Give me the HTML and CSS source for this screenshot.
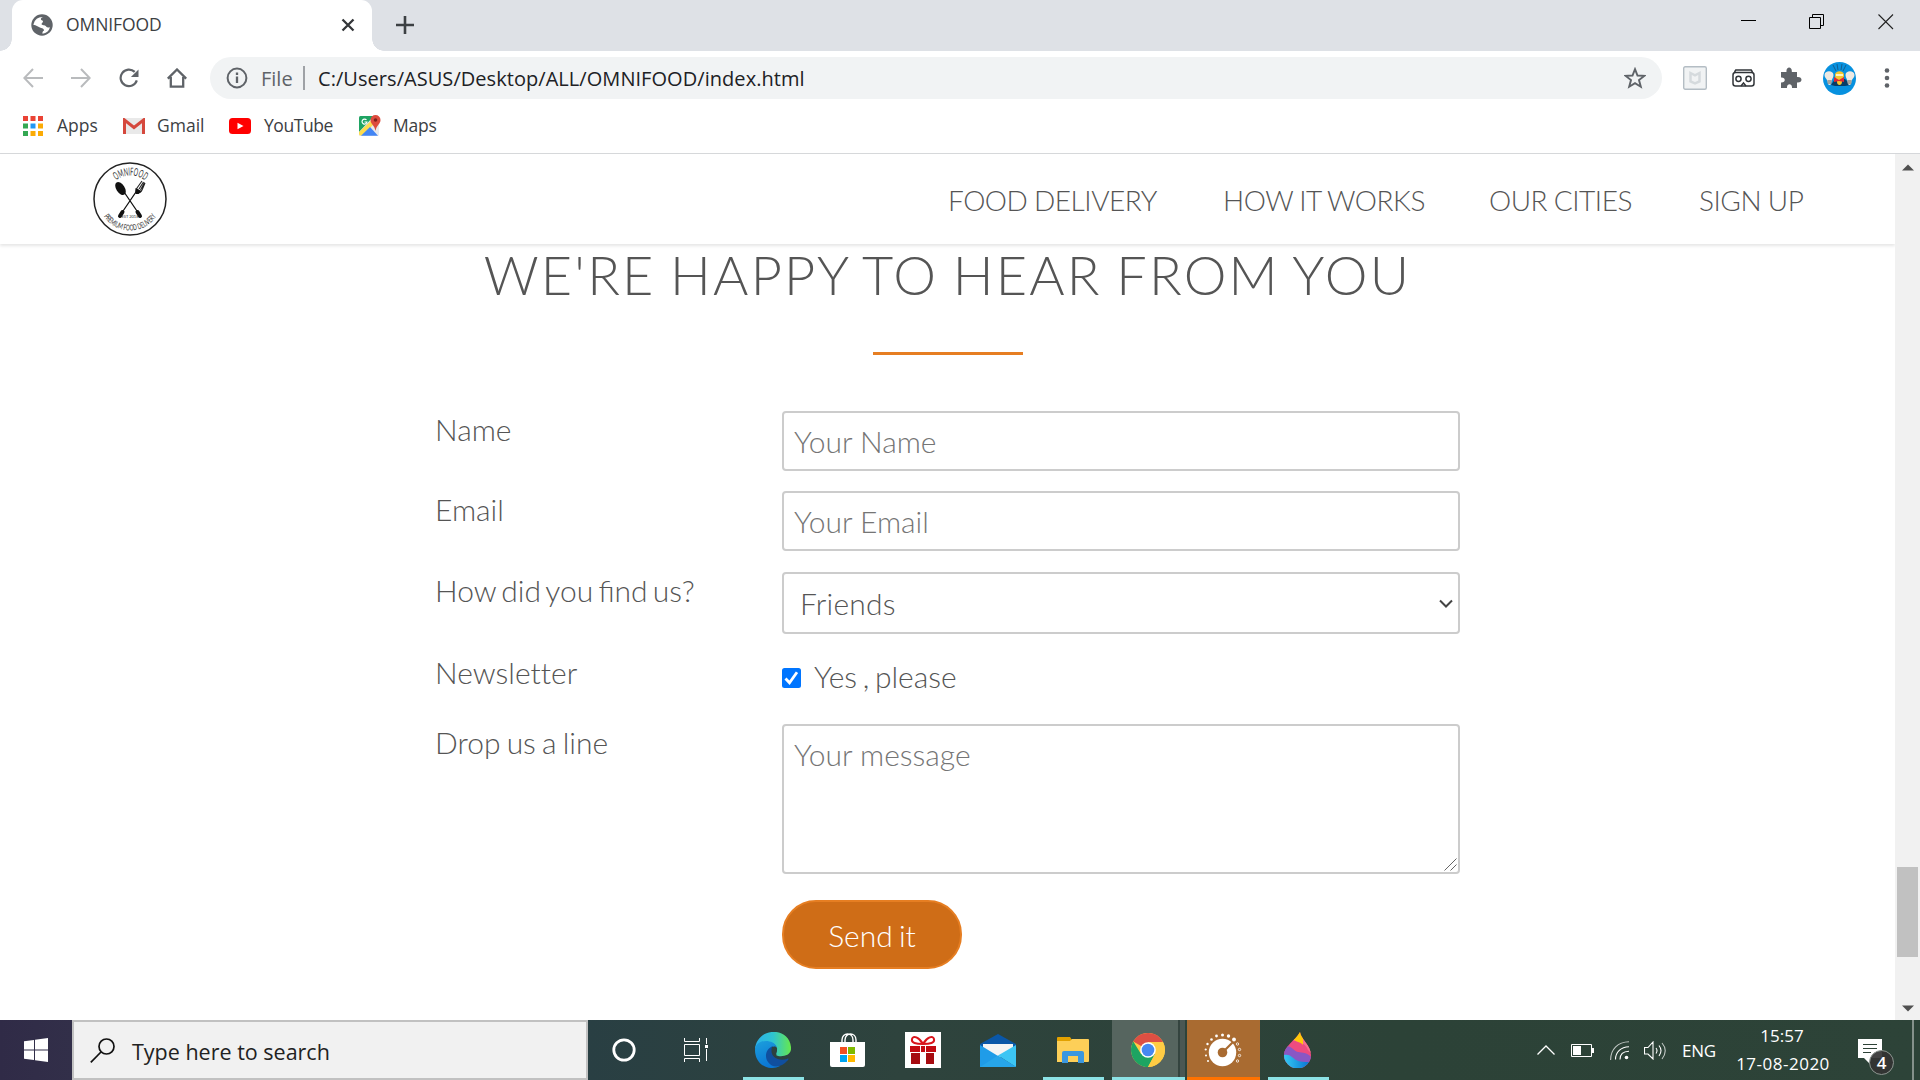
FILE: index.html
```html
<!DOCTYPE html>
<html lang="en">
<head>
<meta charset="utf-8">
<title>OMNIFOOD</title>
<link rel="stylesheet" href="styles.css">
</head>
<body>
<div class="screen">
  <header class="tabstrip">
    <div class="tab">
      <svg class="globe" width="22" height="22" viewBox="0 0 22 22"><circle cx="11" cy="11" r="10.7" fill="#5f6368"/><path d="M12.500 3c-2 .2-3 1.500-2.500 2.800 1 1 1.800.4 2 1.600-.2 1.500-1.500 1.500-1.500 2.800 1.500 1.500 4 .6 4.600 2.400.8 1 2.200 1 3.900.6a9 9 0 0 1-7.500 6.500c-.2-2 .2-2.500 1.600-3.300-.2-1.800-1.400-2.300-3-2.500C8 13.500 5 11.200 2.300 10.800a9 9 0 0 1 10.200-7.800z" fill="#fff"/><path d="M12.600 3.200a8 8 0 0 1 6.400 8c-1.500.9-3 .4-3.700-.8-1-1.300-2-1.100-3.600-1.300 0-1.200 1.400-1.500 1.400-3-.2-1-1.500-1.200-.5-2.900z" fill="#5f6368"/></svg>
      <span class="tab-title">OMNIFOOD</span>
      <svg class="tab-close" width="14" height="14" viewBox="0 0 14 14"><path d="M1.500 1.500l11 11M12.500 1.500l-11 11" stroke="#333639" stroke-width="2.300"/></svg>
    </div>
    <svg class="newtab" width="18" height="18" viewBox="0 0 18 18"><path d="M9 0v18M0 9h18" stroke="#3c4043" stroke-width="2.600"/></svg>
    <div class="win-buttons">
      <svg width="16" height="16" viewBox="0 0 16 16"><path d="M1 6.500h15" stroke="#000"/></svg>
      <svg width="16" height="16" viewBox="0 0 16 16" fill="none" stroke="#000"><path d="M.5 3.500h11v11h-11zM3.500 3.500v-3h11v11h-3"/></svg>
      <svg width="16" height="16" viewBox="0 0 16 16"><path d="M.5.5l14.500 14.500M15 .5L.5 15" stroke="#222" stroke-width="1.100"/></svg>
    </div>
  </header>

  <div class="toolbar">
    <div class="nav-icons">
      <svg width="20" height="20" viewBox="0 0 20 20" fill="none" stroke="#b9bbbd" stroke-width="2"><path d="M20 10H1.500M10 1L1.300 10l8.700 9"/></svg>
      <svg width="20" height="20" viewBox="0 0 20 20" fill="none" stroke="#b9bbbd" stroke-width="2"><path d="M0 10h18.500M10 1l8.700 9-8.700 9"/></svg>
      <svg width="20" height="20" viewBox="0 0 21 20"><path d="M16.500 3.600A8.700 8.700 0 1 0 18.700 12.500" fill="none" stroke="#5f6368" stroke-width="2.300"/><path d="M20.500 1v8h-8z" fill="#5f6368"/></svg>
      <svg width="20" height="20" viewBox="0 0 20 20" fill="none" stroke="#5f6368" stroke-width="2.300"><path d="M.8 10.600L10 1.500l9.200 9.100M3.800 9v9.700h12.400V9"/></svg>
    </div>
    <div class="omnibox">
      <svg width="22" height="22" viewBox="0 0 22 22"><circle cx="11" cy="11" r="9.400" fill="none" stroke="#5f6368" stroke-width="2"/><path d="M11 9.500v6.500M11 5.500v2.500" stroke="#5f6368" stroke-width="2.300"/></svg>
      <span class="scheme">File</span>
      <span class="divider"></span>
      <span class="url">C:/Users/ASUS/Desktop/ALL/OMNIFOOD/index.html</span>
      <svg class="star" width="22" height="22" viewBox="0 0 22 22"><path d="M11 2.200l2.500 6.300 6.700.4-5.200 4.200 1.800 6.600L11 16.100l-5.800 3.600L7 13.100 1.800 8.900l6.700-.4z" fill="none" stroke="#5f6368" stroke-width="1.900"/></svg>
    </div>
    <div class="extensions">
      <svg width="24" height="24" viewBox="0 0 24 24"><rect x=".7" y=".7" width="22.600" height="22.600" rx="1.500" fill="#f1f3f4" stroke="#b4bdc4" stroke-width="1.400"/><path d="M7.500 7l4.500 2.300L16.500 7v8.500L12 17.500l-4.500-2z" fill="none" stroke="#d5dadd" stroke-width="2.500"/></svg>
      <svg width="23" height="18" viewBox="0 0 23 18" fill="none" stroke="#303438" stroke-width="1.500"><rect x="1" y="3.500" width="21" height="13.500" rx="2.500"/><path d="M2.500 3l1.300-2h15.400l1.300 2" stroke-width="1.500"/><circle cx="6.500" cy="9.800" r="2.600"/><circle cx="16.500" cy="9.800" r="2.600"/><path d="M9 17l2.500-3 2.500 3"/></svg>
      <svg width="22" height="22" viewBox="0 0 22 22"><path d="M1 5h5.500c-.8-6 6-6 5.300 0H17v5c6-.8 6 6.200 0 5.500V21h-5c.5-5-5.500-5-5 0H1v-5.500c5 .4 5-5.500 0-5z" fill="#5f6368"/></svg>
      <svg class="avatar" width="33" height="33" viewBox="0 0 33 33"><circle cx="16.500" cy="16.500" r="16.500" fill="#0791df"/><path d="M10 3l3 6M14 2l1 6M19 2l-1 6M23 3l-3 6" stroke="#125f91"/><path d="M8 23l4-6h10l6 6-6 1H12z" fill="#083c66"/><path d="M1.500 13c0-5 9-5 9 0 0 3-2 4-2 7 0 4-4 4-4 0 0-3-3-4-3-7z" fill="#eee9e2"/><path d="M22.500 13c0-5 9-5 9 0 0 3-3 4-3 7 0 4-4 4-4 0 0-3-2-4-2-7z" fill="#eee9e2"/><path d="M4.500 19h4M24.500 19h4M4.500 21h4M24.500 21h4" stroke="#655f59" stroke-width="1"/><path d="M12 13c0-5 9-5 9 0 0 4-2 4-2 7 0 4-5 4-5 0 0-3-2-3-2-7z" fill="#f6c72e"/><path d="M11 15l5 3 5-3v5l-5-1-5 1z" fill="#dc2733"/><path d="M13 12h7v2h-7z" fill="#fff3c0"/></svg>
      <svg width="6" height="20" viewBox="0 0 6 20" fill="#5f6368"><circle cx="3" cy="2.500" r="2.300"/><circle cx="3" cy="10" r="2.300"/><circle cx="3" cy="17.500" r="2.300"/></svg>
    </div>
  </div>

  <nav class="bookmarks">
    <a class="bm bm-apps"><svg width="20" height="20" viewBox="0 0 20 20"><path d="M0 0h5v5H0zM7.500 0h5v5h-5zM15 0h5v5h-5z" fill="#ea4335"/><path d="M0 7.500h5v5H0zM0 15h5v5H0z" fill="#34a853"/><path d="M7.500 7.500h5v5h-5z" fill="#2196f3"/><path d="M15 7.500h5v5h-5zM7.500 15h5v5h-5zM15 15h5v5h-5z" fill="#fbab05"/></svg><span>Apps</span></a>
    <a class="bm bm-gmail"><svg width="22" height="16" viewBox="0 0 22 16"><rect width="22" height="16" rx="1.500" fill="#e9e9e9"/><path d="M1.500 16V2L11 9.500 20.500 2v14" fill="none" stroke="#d5483d" stroke-width="3"/></svg><span>Gmail</span></a>
    <a class="bm bm-youtube"><svg width="22" height="16" viewBox="0 0 22 16"><rect width="22" height="16" rx="3.500" fill="#f00"/><path d="M8.500 4.800l6 3.200-6 3.300z" fill="#fff"/></svg><span>YouTube</span></a>
    <a class="bm bm-maps"><svg width="22" height="21" viewBox="0 0 22 21"><rect y="1" width="20" height="20" rx="1.500" fill="#e8eaed"/><path d="M0 2.500Q0 1 1.500 1H15L0 17z" fill="#1fa463"/><path d="M0 17L14 4v6L3 20.500H1.500Q0 20.500 0 19z" fill="#fddc4e"/><path d="M2 20.800l9-8.800 8 8.800z" fill="#4285f4"/><path d="M16.500 0a5 5 0 0 1 5 5c0 4-4 5-5 11-1-6-5-7-5-11a5 5 0 0 1 5-5z" fill="#dd4b3e"/><circle cx="16.500" cy="5" r="1.800" fill="#7d211c"/><path d="M7.500 5A2.500 2.500 0 1 0 8 7H5.500" fill="none" stroke="#fff" stroke-width="1.200"/></svg><span>Maps</span></a>
  </nav>

  <div class="viewport">
    <main class="page">
      <div class="site-nav">
        <svg class="logo" width="74" height="74" viewBox="0 0 74 74">
          <defs><path id="arc-top" d="M14 37a23.500 23.500 0 0 1 47 0"/><path id="arc-bottom" d="M5.500 37a31.500 31.500 0 0 0 63 0"/></defs>
          <circle cx="37" cy="37" r="36" fill="#fff" stroke="#222" stroke-width="1.500"/>
          <text class="logo-top"><textPath href="#arc-top" startOffset="50%" text-anchor="middle" textLength="31" lengthAdjust="spacingAndGlyphs">OMNIFOOD</textPath></text>
          <text class="logo-bottom"><textPath href="#arc-bottom" startOffset="50%" text-anchor="middle" textLength="62" lengthAdjust="spacingAndGlyphs">PREMIUM FOOD DELIVERY</textPath></text>
          <path d="M29 27L46 52M45 27L28 52" stroke="#111" stroke-width="1.300"/>
          <path d="M44.500 50l2.500 4M29.500 50l-2.500 4" stroke="#111" stroke-width="4" stroke-linecap="round"/>
          <ellipse cx="27.500" cy="26.500" rx="4.200" ry="7.300" transform="rotate(-33 27.500 26.500)" fill="#111"/>
          <path d="M49 19l-5 7c-2 3-1 5 1 5s3-1 4-3l3-7M50.500 20l-4.500 7M51.500 20.500l-4 7.500" fill="none" stroke="#222" stroke-width="1.100"/><path d="M42.500 26l6 3-3 3h-3z" fill="#111"/>
          <text class="logo-year" x="37" y="56" text-anchor="middle">EST 2018</text>
        </svg>
        <ul class="menu">
          <li class="m1">Food delivery</li><li class="m2">How it works</li><li class="m3">Our cities</li><li class="m4">Sign up</li>
        </ul>
      </div>
      <h2><span>We're happy to hear from you</span></h2>
      <form class="contact">
        <label for="name">Name</label>
        <input class="field" id="name" type="text" placeholder="Your Name">
        <label for="email">Email</label>
        <input class="field" id="email" type="text" placeholder="Your Email">
        <label for="find">How did you find us?</label>
        <div class="field select" id="find"><span>Friends</span><svg width="14" height="9" viewBox="0 0 14 9"><path d="M1 1.500l6 6 6-6" fill="none" stroke="#444" stroke-width="2"/></svg></div>
        <label class="news-label" for="news">Newsletter</label>
        <div class="check-row" id="news"><svg class="check" width="19" height="20" viewBox="0 0 19 20"><rect width="19" height="20" rx="2.500" fill="#0075ff"/><path d="M3.500 10.500l4 4.300 7.500-10.500" fill="none" stroke="#fff" stroke-width="2.800"/></svg><span>Yes , please</span></div>
        <label class="msg-label" for="msg">Drop us a line</label>
        <div class="area-wrap"><textarea class="field" id="msg" placeholder="Your message"></textarea><svg class="grip" width="13" height="13" viewBox="0 0 13 13"><path d="M.5 12.500l12-12M6.500 12.500l6-6" stroke="#666" stroke-width="1"/></svg></div>
        <span></span>
        <button class="send" type="button">Send it</button>
      </form>
    </main>
    <div class="scrollbar">
      <svg width="12" height="7" viewBox="0 0 12 7"><path d="M0 6.500L6 .5l6 6z" fill="#505050"/></svg>
      <div class="thumb"></div>
      <svg width="12" height="7" viewBox="0 0 12 7"><path d="M0 .5l6 6 6-6z" fill="#505050"/></svg>
    </div>
  </div>

  <footer class="taskbar">
    <div class="start"><svg width="24" height="24" viewBox="0 0 24 24" fill="#fff"><path d="M0 3.300L10 2v9.500H0zM11 1.800L24 0v11.500H11zM0 12.500h10V22L0 20.700zM11 12.500h13V24L11 22.200z"/></svg></div>
    <div class="search"><svg width="25" height="25" viewBox="0 0 25 25" fill="none" stroke="#111" stroke-width="1.700"><circle cx="16.500" cy="8.500" r="7.500"/><path d="M11 14L.8 24.300"/></svg><span>Type here to search</span></div>
    <div class="apps">
      <div class="app w-cortana"><svg width="24" height="24" viewBox="0 0 24 24"><circle cx="12" cy="12" r="10.200" fill="none" stroke="#fff" stroke-width="2.800"/></svg></div>
      <div class="app w-tasks"><svg width="24" height="24" viewBox="0 0 24 24" fill="none" stroke="#fff" stroke-width="1"><path d="M.5 0v3.500h15V0M.5 6.500h15v11H.5zM.5 24v-3.500h15V24M22.500 0v6M22.500 11v12"/><path d="M21 7h3v3h-3z" fill="#fff" stroke="none"/></svg></div>
      <div class="app w-edge open"><svg width="36" height="36" viewBox="0 0 36 36"><defs><linearGradient id="eg1" x1="0" x2="1"><stop stop-color="#2ab0ea"/><stop offset=".5" stop-color="#2fc4d0"/><stop offset="1" stop-color="#66e84c"/></linearGradient><linearGradient id="eg2" y1="0" y2="1" x2=".4"><stop stop-color="#1c9fdc"/><stop offset="1" stop-color="#0a76d4"/></linearGradient></defs><path d="M0 17C2-5 34-6 36 15c1 8-7 10-13 9-4-1-1-3-1-6C22 9 6 7 0 17z" fill="url(#eg1)"/><path d="M0 18C0 7 18 6 22 15c-6-1-9 4-8 9 1 5 6 9 11 10C13 40 0 32 0 18z" fill="url(#eg2)"/><path d="M18 14c-5 8 3 16 14 13 2-1 2 0 0 2-5 6-14 8-19 1-4-6-2-13 5-16z" fill="#104f9e"/><path d="M17 15c2-1 4-.5 5 1 .6 3-2 5 0 7-3-1-6-4-5-8z" fill="#2d423f"/></svg></div>
      <div class="app w-store"><svg width="36" height="35" viewBox="0 0 36 35"><path d="M12 10V7c0-8 11-8 11 0v3M15 10V7c0-8 11-8 11 0v3" fill="none" stroke="#fff" stroke-width="1.400"/><path d="M0 9h35v23q0 2-2 2H2q-2 0-2-2z" fill="#fff"/><path d="M10 14h7v7h-7z" fill="#f25022"/><path d="M18 14h7v7h-7z" fill="#7fba00"/><path d="M10 22h7v7h-7z" fill="#00a4ef"/><path d="M18 22h7v7h-7z" fill="#ffb900"/></svg></div>
      <div class="app w-gift"><svg width="36" height="36" viewBox="0 0 36 36"><path d="M0 0h36v36H0z" fill="#fff"/><path d="M5 14h10v6H5zM16 14h4v6h-4zM21 14h10v6H21z" fill="#c30b12"/><path d="M6 21h9v11H6zM21 21h8v11h-8z" fill="#a60b10"/><path d="M18 12C14 5 8 3 7 7s4 5 11 5zM18 12C22 5 28 3 29 7s-4 5-11 5z" fill="none" stroke="#d9151c" stroke-width="2"/></svg></div>
      <div class="app w-mail"><svg width="36" height="33" viewBox="0 0 36 33"><path d="M0 10L18 0l18 10v4H0z" fill="#0a57a8"/><path d="M3 10h30v8L18 24 3 18z" fill="#f4f4f4"/><path d="M0 11l36 22H0z" fill="#1f9ce8"/><path d="M36 11L18 21.500 36 33z" fill="#3cc5f4"/><path d="M0 33l18-11.500L36 33z" fill="#27a6ea"/></svg></div>
      <div class="app w-files open"><svg width="32" height="27" viewBox="0 0 32 27"><path d="M0 1q0-1 1-1h12l2 3v4H0z" fill="#e2a100"/><path d="M0 4h13l2-2h16q1 0 1 1v21q0 1-1 1H0z" fill="#fdcf58"/><path d="M5 26V16q0-2 2-2h18q2 0 2 2v10h-6v-7H11v7z" fill="#3b97df"/></svg></div>
      <div class="app w-chrome open"><svg width="34" height="34" viewBox="0 0 34 34"><circle cx="17" cy="17" r="17" fill="#fc4"/><path d="M17 17L2.300 8.500A17 17 0 0 1 32 9H17z" fill="#dd4f43"/><path d="M2.300 8.500A17 17 0 0 0 17 34l7-13-7-4-7 4z" fill="#1da462"/><path d="M17 34a17 17 0 0 0 15-25H17l7 12z" fill="#fc4"/><circle cx="17" cy="17" r="7.800" fill="#fff"/><circle cx="17" cy="17" r="6.300" fill="#4688f1"/></svg></div>
      <div class="app w-game"><svg width="38" height="34" viewBox="0 0 38 34" fill="#fff"><circle cx="18.500" cy="19.500" r="13.700"/><circle cx="18.500" cy="19.500" r="4.800" fill="#a96b31"/><path d="M20 18l9-9" stroke="#a96b31" stroke-width="2.200"/><circle cx="30" cy="6.500" r="1.900"/><circle cx="24.500" cy="3" r="1.700"/><circle cx="18.500" cy="2" r="1.500"/><circle cx="12.500" cy="3" r="1.400"/><circle cx="7.500" cy="6.500" r="1.300"/><circle cx="3.500" cy="11" r="1.200"/><circle cx="1.700" cy="16.500" r="1.100"/><circle cx="2" cy="22.500" r="1"/><circle cx="4" cy="28" r="1"/><g fill="none" stroke="#fff" stroke-width=".8"><circle cx="33.500" cy="11" r="1.200"/><circle cx="35.500" cy="16.500" r="1.200"/><circle cx="35.500" cy="22.500" r="1.200"/><circle cx="33.500" cy="28" r="1.200"/></g></svg></div>
      <div class="app w-paint open"><svg width="28" height="36" viewBox="0 0 28 36"><defs><clipPath id="drop"><path d="M16 0c1 7 11 14 11 23a13.300 13.300 0 0 1-27 0C0 14 11 9 16 0z"/></clipPath><linearGradient id="blue" x1="0" x2="1"><stop stop-color="#35c9f3"/><stop offset="1" stop-color="#0873d2"/></linearGradient></defs><g clip-path="url(#drop)"><path d="M0 0h28v36H0z" fill="#ee4b80"/><path d="M8 8c6 2 13 2 16 10l4 4V10L18 6z" fill="#f5708f"/><path d="M10 0h9v13C17 10 13 10 10 8z" fill="#ffc90a"/><path d="M0 15c7-3 9 4 14 5s9 0 14 6v4H0z" fill="#8957c4"/><path d="M0 23c7-1 8 3 12 5s8 2 14 2v6H0z" fill="url(#blue)"/></g></svg></div>
    </div>
    <div class="tray">
      <svg class="t-up" width="18" height="10" viewBox="0 0 18 10"><path d="M.5 9.500L9 1l8.500 8.500" fill="none" stroke="#fff" stroke-width="1.300"/></svg>
      <svg class="t-bat" width="23" height="13" viewBox="0 0 23 13"><path d="M.5.500h20v12H.5z" fill="none" stroke="#fff"/><path d="M2 2h8v9H2zM21 4h2v5h-2z" fill="#fff"/></svg>
      <svg class="t-wifi" width="19" height="19" viewBox="0 0 19 19" fill="none" stroke="#fff" stroke-width="1.100"><path d="M.6 19C.6 8 8 1 19 .8" opacity=".7"/><path d="M5.500 18.500C5.500 11 11 6 19 5.700M10 18.500c0-5 3-8 9-8.200"/><circle cx="16.500" cy="16.500" r="1.800" fill="#fff" stroke="none"/></svg>
      <svg class="t-vol" width="23" height="19" viewBox="0 0 23 19" fill="none" stroke="#fff" stroke-width="1.100"><path d="M.5 6.500h3.500L9 1v17l-5-5H.5zM12 7q2 2.500 0 5.500M15 4.500q4 5 0 10.500"/><path d="M18 2q6.500 7.500 0 16" opacity=".7"/></svg>
      <span class="lang">ENG</span>
      <div class="clock"><span class="time">15:57</span><span class="date">17-08-2020</span></div>
      <div class="notif"><svg width="37" height="36" viewBox="0 0 37 36"><path d="M0 0h24v19H13l-1 6-6-6H0z" fill="#fff"/><path d="M5 5.500h14M5 9.500h14M5 13.500h8" stroke="#2d4237"/><circle cx="23.500" cy="23.500" r="12" fill="#333" fill-opacity=".92" stroke="#8d9691"/><text class="badge" x="23.500" y="29.500" text-anchor="middle">4</text></svg></div>
      <div class="peek"></div>
    </div>
  </footer>
</div>
</body>
</html>
```
FILE: styles.css
```css
* { box-sizing: border-box; margin: 0; padding: 0; }
body { width: 1920px; height: 1080px; overflow: hidden; background: #fff; font-family: "Open Sans", "Noto Sans", sans-serif; }
svg { display: block; flex: none; }
.screen { display: flex; flex-direction: column; width: 1920px; height: 1080px; }

/* Browser window */
.tabstrip { display: flex; height: 51px; background: #dee1e6; }
.tab { position: relative; display: flex; width: 360px; margin-left: 12px; padding: 0 17px 2px 19px; align-items: center; background: #fff; border-radius: 11px 11px 0 0; }
.tab::before, .tab::after { content: ""; position: absolute; bottom: 0; width: 12px; height: 12px; }
.tab::before { left: -12px; background: radial-gradient(circle at 0 0, #dee1e6 11.500px, #fff 12px); }
.tab::after { right: -12px; background: radial-gradient(circle at 100% 0, #dee1e6 11.500px, #fff 12px); }
.tab-title { margin-left: 13px; padding-bottom: 2px; font: 17.500px "Open Sans", sans-serif; letter-spacing: -.1px; color: #3c4043; }
.tab-close { margin-left: auto; }
.newtab { margin: 16px 0 0 24px; }
.win-buttons { display: flex; gap: 53px; margin: 14px 26px 0 auto; }
.toolbar { display: flex; height: 54px; align-items: center; }
.nav-icons { display: flex; width: 210px; padding-left: 23px; gap: 28px; align-items: center; }
.omnibox { display: flex; width: 1452px; height: 42px; padding: 0 16px 0 16px; align-items: center; border-radius: 21px; background: #f1f3f4; font-size: 20px; }
.scheme { margin-left: 13px; width: 32px; color: #5f6368; }
.divider { width: 2px; height: 24px; margin: 0 13px 0 10px; background: #9fa2a6; }
.url { color: #202124; letter-spacing: .05px; white-space: nowrap; }
.star { margin-left: auto; }
.extensions { display: flex; flex: 1; padding: 0 30px 0 21px; align-items: center; justify-content: space-between; }
.avatar { margin: 0 3px 0 -3px; }
.bookmarks { display: flex; height: 49px; padding: 0 0 7px 23px; align-items: center; border-bottom: 1px solid #d5d7da; color: #3c4043; font-size: 17.500px; }
.bm { display: flex; align-items: center; }
.bm span { padding-bottom: 2px; }
.bm-apps { width: 100px; gap: 14px; }
.bm-gmail { width: 106px; gap: 12px; }
.bm-youtube { width: 130px; gap: 13px; letter-spacing: -.45px; }
.bm-maps { gap: 12px; letter-spacing: -.2px; }

/* Web page */
.viewport { display: flex; height: 866px; font-family: Lato, sans-serif; font-weight: 300; color: #555; }
.page { width: 1895px; }
.site-nav { display: flex; height: 90px; padding: 8px 0 0 93px; box-shadow: 0 2px 3px #e6e6e6; }
.logo-top, .logo-bottom, .logo-year { font-family: Lato, sans-serif; font-weight: 400; fill: #333; }
.logo-top { font-size: 11px; }
.logo-bottom { font-size: 8px; }
.logo-year { font-size: 4px; }
.menu { display: flex; flex: 1; list-style: none; padding: 20px 0 0 781px; font-size: 28px; line-height: 36px; letter-spacing: -.45px; word-spacing: -.6px; text-transform: uppercase; white-space: nowrap; }
.m1 { width: 275px; }
.m2 { width: 266px; }
.m3 { width: 210px; }
h2 { display: flex; flex-direction: column; height: 168px; align-items: center; font-size: 54px; font-weight: 300; line-height: 62px; letter-spacing: 2.200px; word-spacing: -2.400px; text-transform: uppercase; white-space: nowrap; }
h2::after { content: ""; width: 150px; height: 3px; margin-top: 46px; background: #e67e22; }
.contact { display: grid; grid-template-columns: 347px 678px; grid-template-rows: 80px 81px 82px 70px 176px 69px; margin-top: -1px; padding-left: 435px; font-size: 30px; line-height: 38px; align-items: start; }
.contact label { margin-top: -1px; word-spacing: -3px; }
.contact .news-label { font-variant-ligatures: none; }
.contact .msg-label { word-spacing: -2px; }
.field { display: block; width: 100%; height: 60px; padding: 0 10px 1px; border: 2px solid #ccc; border-radius: 4px; background: #fff; font: inherit; color: inherit; }
.field::placeholder { color: #757575; opacity: 1; }
.select { display: flex; height: 62px; padding: 0 5px 0 16px; align-items: center; justify-content: space-between; letter-spacing: .2px; }
.check-row { display: flex; padding-top: 3px; align-items: center; gap: 13px; word-spacing: -2.500px; }
.check { margin-top: 4px; }
.area-wrap { position: relative; }
.area-wrap .field { height: 150px; padding-top: 9px; resize: none; }
.grip { position: absolute; right: 3px; bottom: 3px; }
.send { width: 180px; height: 69px; border: 2px solid #e67e22; border-radius: 34px; background: #cf6d17; color: #fff; font: inherit; word-spacing: -2px; }
.scrollbar { display: flex; flex-direction: column; width: 25px; padding: 10px 0 8px; align-items: center; background: #f1f1f1; }
.thumb { width: 21px; height: 90px; margin: 696px 0 auto; background: #c1c1c1; }

/* Taskbar */
.taskbar { display: flex; height: 60px; background: linear-gradient(90deg, #302b47 0, #322f49 72px, #293f43 588px, #2e433d 900px, #2c4237 1400px, #2d4338 100%); color: #fff; }
.start { display: flex; width: 72px; padding: 18px 0 0 24px; }
.search { display: flex; width: 516px; padding-left: 16px; gap: 17px; align-items: center; border: 2px solid #c1c1c1; background: #f1f1f1; color: #222; font-size: 21.500px; }
.search span { padding-top: 2px; }
.apps { display: flex; }
.app { display: flex; width: 75px; align-items: center; justify-content: center; border-bottom: 3px solid transparent; padding: 3px 2px 0 0; }
.w-cortana { width: 72px; padding-right: 0; }
.w-tasks { width: 73px; }
.w-edge { margin-left: 10px; width: 61px; }
.w-store { margin-left: 7px; width: 76px; }
.w-gift { width: 74px; }
.w-files { width: 61px; margin-left: 7px; }
.w-chrome { width: 73px; margin-left: 8px; background: linear-gradient(90deg, #56655f 66px, #34443f 66px 68px, #4a5753 68px); }
.w-game { width: 73px; margin-left: 2px; background: #a96b31; }
.w-paint { width: 61px; margin-left: 8px; }
.open { border-color: #8ce2e5; }
.w-game { border-color: #ff7200; }
.tray { display: flex; margin-left: auto; align-items: center; font-size: 17px; white-space: nowrap; }
.t-bat { margin-left: 16px; }
.t-wifi { margin-left: 16px; }
.t-vol { margin-left: 15px; }
.lang { width: 34px; margin-left: 15px; letter-spacing: -.3px; }
.clock { display: flex; flex-direction: column; width: 94px; margin-left: 20px; align-items: center; line-height: 28px; }
.time { margin-left: -2px; }
.date { letter-spacing: .5px; }
.notif { margin: 14px 17px 0 28px; }
.badge { font: 600 17px "Open Sans", sans-serif; fill: #fff; }
.peek { width: 8px; height: 60px; border-left: 2px solid #85918b; }
```
